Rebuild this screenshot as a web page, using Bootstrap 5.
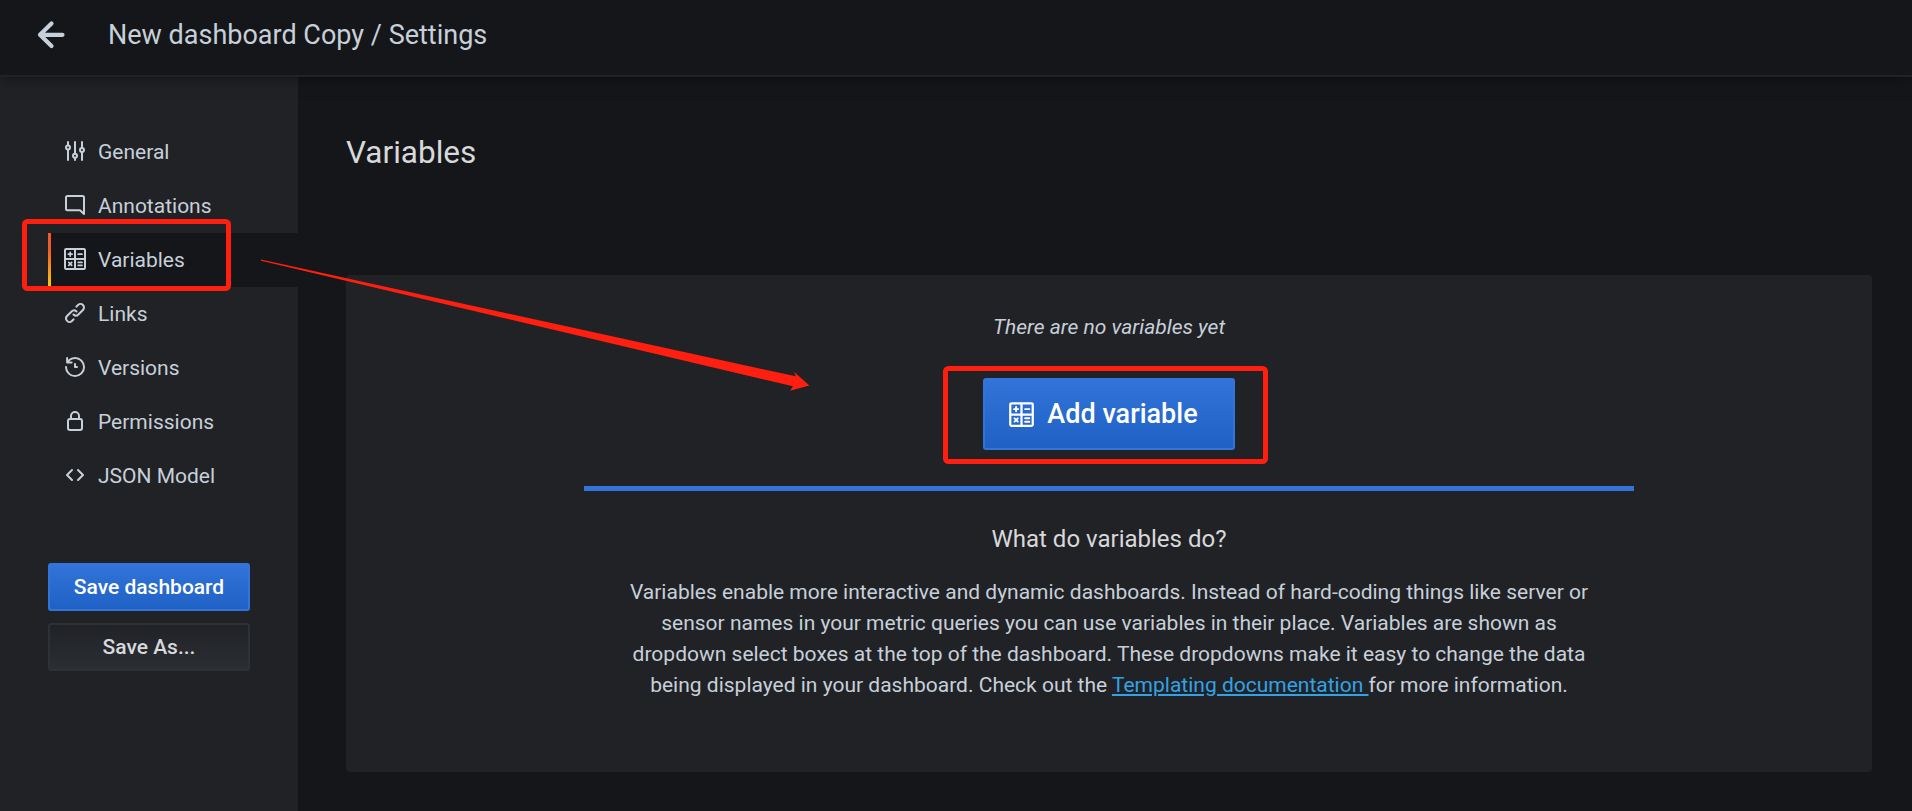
<!DOCTYPE html>
<html lang="en">
<head>
<meta charset="utf-8">
<title>New dashboard Copy / Settings</title>
<link href="https://cdn.jsdelivr.net/npm/bootstrap@5.3.0/dist/css/bootstrap.min.css" rel="stylesheet">
<style>
  :root { --bg1: #151619; --bg2: #212226; --ink: #c7d0d9; --heading: #d8d9da; --blue: #3274d9; }
  body { font-family: Roboto, "Liberation Sans", sans-serif; font-size: 21px; line-height: 31px; background: var(--bg1); color: var(--ink); height: 811px; overflow: hidden; }
  .topbar { height: 77px; padding: 0 0 5px 36px; border-bottom: 2px solid var(--bg2); background: var(--bg1); box-shadow: 0 0 15px rgba(0, 0, 0, .5); z-index: 2; gap: 42px; }
  .topbar h1 { font-size: 27px; line-height: 34px; }
  .sidebar { width: 298px; background: var(--bg2); padding-top: 48px; }
  .sidebar .nav-link { height: 54px; margin-left: 48px; padding: 0 0 0 15px; gap: 11px; color: var(--ink); }
  .sidebar .nav-link svg { margin-bottom: 2px; }
  .sidebar .nav-link.active { background: linear-gradient(#f05a28 30%, #fbca0a 99%) left / 3px 100% no-repeat, var(--bg1); }
  .side-actions { padding: 60px 48px 0; gap: 12px; }
  .btn { --bs-btn-border-radius: 3px; --bs-btn-border-width: 2px; --bs-btn-font-weight: 500; background-origin: border-box; font-size: 21px; height: 48px; padding: 0; line-height: 42px; }
  .btn-primary { --bs-btn-border-color: var(--blue); background-image: linear-gradient(#3274d9, #1f60c4); }
  .btn-secondary { --bs-btn-color: var(--heading); --bs-btn-border-color: #2c3235; background-image: linear-gradient(#202226, #2b2e33); }
  .content { padding: 56px 40px 0 48px; }
  .content h2 { font-size: 31.5px; line-height: 40px; color: var(--heading); margin-bottom: 102px; }
  .empty-cta { height: 497px; border-radius: 4px; background: var(--bg2); padding-top: 37px; }
  .add-btn { width: 252px; height: 72px; font-size: 27px; gap: 12px; padding: 0 12px 0 0; margin-top: 35px; }
  .info { width: 1050px; border-top: 5px solid var(--blue); margin-top: 36px; padding-top: 31px; }
  .info h3 { font-size: 24px; line-height: 34px; color: var(--heading); margin-bottom: 21px; }
  .info p { width: 966px; }
  .info a { color: #33a2e5; }
  .annotations { left: 0; top: 0; z-index: 5; pointer-events: none; }
</style>
</head>
<body class="d-flex flex-column position-relative">
<svg class="d-none">
  <symbol id="calc" viewBox="0 0 24 24"><g fill="none" stroke="currentColor" stroke-width="2" stroke-linejoin="round"><rect x="2" y="2" width="20" height="20" rx="1.2"/><path d="M12 2v20M2 12h20"/><path stroke-width="1.7" stroke-linecap="round" d="M7.2 5.3v3.8M5.3 7.2h3.8M15.2 7.2h3.8M5.8 15.4l2.9 2.9M8.7 15.4l-2.9 2.9M15.2 15.4h3.8M15.2 18.4h3.8"/></g></symbol>
</svg>

<header class="topbar d-flex align-items-center flex-shrink-0 position-relative">
  <svg width="30" height="30" viewBox="0 0 30 30" fill="none" stroke="currentColor" stroke-width="4.2" stroke-linecap="round" stroke-linejoin="round"><path d="M15.500 3.500L4 14.800l11.500 11.200M4 14.800h22.500"/></svg>
  <h1 class="m-0 fw-normal">New dashboard Copy / Settings</h1>
</header>

<div class="d-flex flex-grow-1">
  <aside class="sidebar flex-shrink-0">
    <nav class="nav flex-column flex-nowrap">
      <a class="nav-link d-flex align-items-center" href="#"><svg width="24" height="24" viewBox="0 0 24 24" fill="none" stroke="currentColor" stroke-width="2" stroke-linecap="round"><path d="M5 3v3M5 11v10M12 3v11.500M12 19v2M19 3v5.500M19 13.500v7.500"/><circle cx="5" cy="8.500" r="2"/><circle cx="12" cy="16.800" r="2"/><circle cx="19" cy="11" r="2"/></svg>General</a>
      <a class="nav-link d-flex align-items-center" href="#"><svg width="24" height="24" viewBox="0 0 24 24" fill="none" stroke="currentColor" stroke-width="2" stroke-linejoin="round"><path d="M4.500 3h15A1.500 1.500 0 0 1 21 4.500V21l-4-3.800H4.500A1.500 1.500 0 0 1 3 15.700V4.500A1.500 1.500 0 0 1 4.500 3z"/></svg>Annotations</a>
      <a class="nav-link active d-flex align-items-center" href="#"><svg width="24" height="24"><use href="#calc"/></svg>Variables</a>
      <a class="nav-link d-flex align-items-center" href="#"><svg width="24" height="24" viewBox="0 0 24 24" fill="currentColor"><path d="M10,17.550,8.230,19.270a2.470,2.470,0,0,1-3.500-3.500l4.540-4.550a2.460,2.460,0,0,1,3.390-.09l.12.1a1,1,0,0,0,1.400-1.430A2.750,2.750,0,0,0,14,9.590a4.460,4.460,0,0,0-6.090.22L3.310,14.360a4.480,4.480,0,0,0,6.330,6.330L11.370,19A1,1,0,0,0,10,17.550ZM20.690,3.310a4.490,4.490,0,0,0-6.330,0L12.630,5A1,1,0,0,0,14,6.450l1.730-1.720a2.470,2.470,0,0,1,3.500,3.500l-4.540,4.550a2.460,2.460,0,0,1-3.390.09l-.12-.1a1,1,0,0,0-1.400,1.430,2.750,2.750,0,0,0,.23.21,4.470,4.470,0,0,0,6.090-.22l4.550-4.550A4.490,4.490,0,0,0,20.690,3.310Z"/></svg>Links</a>
      <a class="nav-link d-flex align-items-center" href="#"><svg width="24" height="24" viewBox="0 0 24 24" fill="currentColor"><path d="M12 2A10 10 0 0 0 5.120 4.770V3a1 1 0 0 0-2 0v4.500a1 1 0 0 0 1 1h4.500a1 1 0 0 0 0-2H6.220A8 8 0 1 1 4 12a1 1 0 0 0-2 0A10 10 0 1 0 12 2zm0 6a1 1 0 0 0-1 1v3a1 1 0 0 0 1 1h2a1 1 0 0 0 0-2h-1V9a1 1 0 0 0-1-1z"/></svg>Versions</a>
      <a class="nav-link d-flex align-items-center" href="#"><svg width="24" height="24" viewBox="0 0 24 24" fill="none" stroke="currentColor" stroke-width="2"><rect x="5" y="10" width="14" height="11" rx="2"/><path d="M8 10V7a4 4 0 0 1 8 0v3"/></svg>Permissions</a>
      <a class="nav-link d-flex align-items-center" href="#"><svg width="24" height="24" viewBox="0 0 24 24" fill="none" stroke="currentColor" stroke-width="2" stroke-linecap="round" stroke-linejoin="round"><path d="M9 7l-5 5 5 5M15 7l5 5-5 5"/></svg>JSON Model</a>
    </nav>
    <div class="side-actions d-flex flex-column">
      <button class="btn btn-primary">Save dashboard</button>
      <button class="btn btn-secondary">Save As...</button>
    </div>
  </aside>

  <main class="content flex-grow-1">
    <h2 class="fw-normal mt-0">Variables</h2>
    <section class="empty-cta d-flex flex-column align-items-center text-center">
      <p class="fst-italic mb-0">There are no variables yet</p>
      <button class="btn btn-primary add-btn d-flex align-items-center justify-content-center"><svg width="27" height="27"><use href="#calc"/></svg>Add variable</button>
      <div class="info d-flex flex-column align-items-center">
        <h3 class="fw-normal mt-0">What do variables do?</h3>
        <p class="m-0">Variables enable more interactive and dynamic dashboards. Instead of hard-coding things like server or sensor names in your metric queries you can use variables in their place. Variables are shown as dropdown select boxes at the top of the dashboard. These dropdowns make it easy to change the data being displayed in your dashboard. Check out the <a href="#">Templating documentation </a>for more information.</p>
      </div>
    </section>
  </main>
</div>

<!-- highlight boxes and arrow drawn over the page -->
<svg class="annotations position-absolute" width="1912" height="811" viewBox="0 0 1912 811">
  <g fill="none" stroke="#ff1f10" stroke-width="5"><rect x="24.500" y="221.500" width="204" height="67" rx="3"/><rect x="945.500" y="368.500" width="320" height="93" rx="3"/></g>
  <path fill="#ff1f10" d="M261 259.600L795.700 376.300L794.200 372L809.400 385.500L790 390.700L793 386.300L261 260.800z"/>
</svg>
<script src="https://cdn.jsdelivr.net/npm/bootstrap@5.3.0/dist/js/bootstrap.bundle.min.js"></script>
</body>
</html>
